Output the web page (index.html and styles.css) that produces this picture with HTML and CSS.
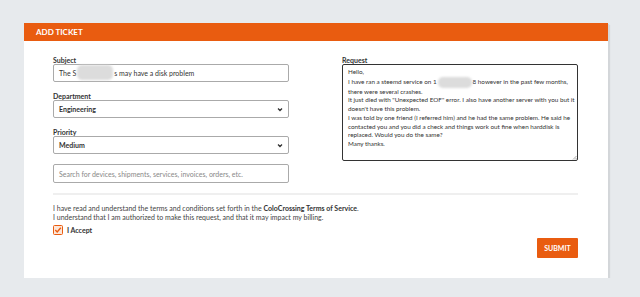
FILE: index.html
```html
<!DOCTYPE html>
<html>
<head>
	<meta charset="utf-8">
	<title>Add Ticket</title>
	<link rel="stylesheet" href="styles.css">
</head>
<body>
	<section class="card">
		<header class="card-head">ADD TICKET</header>
		<div class="card-body">
			<div class="cols">
				<div class="col">
					<div class="field">
						<label>Subject</label>
						<div class="input">The S<span class="blur b1"></span>s may have a disk problem</div>
					</div>
					<div class="field">
						<label>Department</label>
						<div class="input select">Engineering
							<svg width="6" height="5" viewBox="0 0 6 5"><path d="M1 1.5 L3 3.5 L5 1.5" fill="none" stroke="#333" stroke-width="1.3"/></svg>
						</div>
					</div>
					<div class="field">
						<label>Priority</label>
						<div class="input select">Medium
							<svg width="6" height="5" viewBox="0 0 6 5"><path d="M1 1.5 L3 3.5 L5 1.5" fill="none" stroke="#333" stroke-width="1.3"/></svg>
						</div>
					</div>
					<div class="field search">
						<div class="input placeholder">Search for devices, shipments, services, invoices, orders, etc.</div>
					</div>
				</div>
				<div class="col">
					<div class="field">
						<label>Request</label>
						<div class="textarea">
							Hello,<br>
							I have ran a steemd service on 1<span class="blur b2"></span>8 however in the past few months, there were several crashes.<br>
							It just died with "Unexpected EOF" error. I also have another server with you but it doesn't have this problem.<br>
							I was told by one friend (I referred him) and he had the same problem. He said he contacted you and you did a check and things work out fine when harddisk is replaced. Would you do the same?<br>
							Many thanks.
							<svg class="grip" width="5" height="5" viewBox="0 0 5 5"><path d="M4.5 1 L1 4.5 M4.5 3 L3 4.5" stroke="#888" stroke-width="0.7"/></svg>
						</div>
					</div>
				</div>
			</div>

			<hr class="divider">

			<p class="terms">
				I have read and understand the terms and conditions set forth in the <b>ColoCrossing Terms of Service</b>.<br>
				I understand that I am authorized to make this request, and that it may impact my billing.
			</p>
			<div class="accept">
				<svg width="10" height="10" viewBox="0 0 10 10"><rect x="0.5" y="0.5" width="9" height="9" rx="1" fill="#fde6d8" stroke="#e95c10"/><path d="M2.3 5 L4.2 7 L7.8 2.8" fill="none" stroke="#e95c10" stroke-width="1.4"/></svg>
				<b>I Accept</b>
			</div>
			<div class="actions">
				<button class="submit">SUBMIT</button>
			</div>
		</div>
	</section>
</body>
</html>
```

FILE: styles.css
```css
body { margin: 0; background-color: #e7eaed; font-family: 'Lato', 'Liberation Sans', sans-serif; color: #444; }
.card {
	margin: 23px 0 0 24px; width: 584px; background: #fff; box-shadow: 1px 1px 0 #d3d6d9, 2px 2px 1px rgba(0,0,0,.08);
}
.card-head {
	background-color: #e95c10; color: #fff; font-weight: bold; font-size: 8px; height: 18px; line-height: 18px; padding-left: 12px;
}
.card-body { padding: 15px 30px 20px 29px; }
.cols { display: flex; gap: 53px; }
.col { width: 236px; }
.field { display: flex; flex-direction: column; margin-bottom: 10px; }
.field label { font-size: 7px; font-weight: bold; color: #333; height: 8px; line-height: 8px; }
.field.search { margin-top: 2px; margin-bottom: 0; }
.input {
	box-sizing: border-box; height: 18px; border: 1px solid #aaa; border-radius: 2px; padding: 0 5px; font-size: 7px; line-height: 16px; color: #333; display: flex; align-items: center; white-space: nowrap;
}
.input.select { justify-content: space-between; font-weight: bold; color: #333; }
.input.placeholder { color: #888; height: 19px; }
.blur {
	display: inline-block; background: #dcdcdc; border-radius: 5px; filter: blur(1px);
}
.b1 { width: 36px; height: 15px; margin: -2px 1px 0 1px; }
.b2 { width: 34px; height: 11px; vertical-align: middle; margin: 0 1px; }
.textarea {
	position: relative; box-sizing: border-box; height: 97px; border: 1.5px solid #333; border-radius: 2px; padding: 3px 2px 3px 5px; font-size: 6.3px; line-height: 8.7px; color: #333;
}
.grip { position: absolute; right: 0; bottom: 0; }
.divider { border: 0; height: 2px; background: #efefef; margin: 10px 0 0; }
.terms { font-size: 7px; line-height: 9px; margin: 9px 0 0; color: #444; }
.terms b { color: #333; }
.accept { display: flex; align-items: center; gap: 4px; font-size: 7px; color: #333; margin-top: 3px; height: 10px; }
.actions { display: flex; justify-content: flex-end; margin-top: 3px; }
.submit {
	background-color: #e95c10; color: #fff; border: 0; border-radius: 1px; font-family: 'Lato', sans-serif; font-weight: bold; font-size: 7px; width: 41px; height: 20px; padding: 0;
}
```
